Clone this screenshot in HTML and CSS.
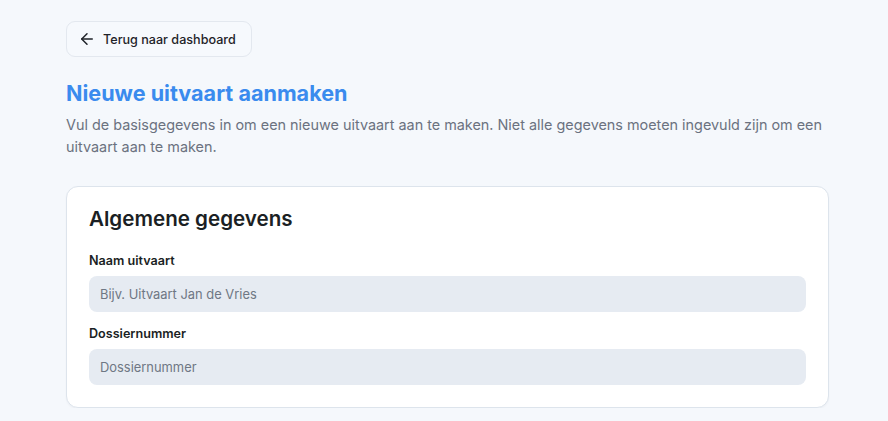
FILE: index.html
```html
<!DOCTYPE html>
<html lang="nl">
<head>
<meta charset="utf-8">
<title>Nieuwe uitvaart aanmaken</title>
<link rel="stylesheet" href="styles.css">
</head>
<body>
<main class="page">
  <a class="back-btn" href="#">
    <svg class="back-icon" viewBox="0 0 24 24" width="18" height="18" fill="none" stroke="currentColor" stroke-width="2" stroke-linecap="round" stroke-linejoin="round"><path d="M19 12H5"/><path d="M12 19l-7-7 7-7"/></svg>
    <span>Terug naar dashboard</span>
  </a>
  <h1 class="title">Nieuwe uitvaart aanmaken</h1>
  <p class="intro">Vul de basisgegevens in om een nieuwe uitvaart aan te maken. Niet alle gegevens moeten ingevuld zijn om een uitvaart aan te maken.</p>
  <section class="card">
    <h2 class="card-title">Algemene gegevens</h2>
    <div class="field">
      <label class="label" for="naam">Naam uitvaart</label>
      <input class="input" id="naam" type="text" placeholder="Bijv. Uitvaart Jan de Vries">
    </div>
    <div class="field">
      <label class="label" for="dossier">Dossiernummer</label>
      <input class="input" id="dossier" type="text" placeholder="Dossiernummer">
    </div>
  </section>
</main>
</body>
</html>
```
FILE: styles.css
```css
* { box-sizing: border-box; }
html, body { margin: 0; padding: 0; }
body {
  background: #f5f8fc;
  font-family: Inter, "Noto Sans", sans-serif;
  color: #1f2329;
}
.page {
  width: 763px;
  margin-left: 66px;
  padding-top: 21px;
}
.back-btn {
  display: inline-flex;
  align-items: center;
  gap: 7px;
  height: 36px;
  padding: 0 15px 0 11px;
  border: 1px solid #e3e8ef;
  border-radius: 9px;
  background: #f6f9fd;
  color: #1f2329;
  text-decoration: none;
  font-size: 12.6px;
  font-weight: 500;
}
.back-icon { display: block; flex: none; }
.title {
  margin: 23px 0 0;
  font-size: 21.6px;
  line-height: 27px;
  font-weight: 700;
  color: #3a8bee;
}
.intro {
  margin: 7px 0 0;
  font-size: 14.4px;
  line-height: 21.6px;
  color: #6b7280;
}
.card {
  margin-top: 29px;
  background: #fff;
  border: 1px solid #dde4ec;
  border-radius: 12px;
  padding: 18px 22px 22px;
  box-shadow: 0 1px 2px rgba(15, 23, 42, 0.04);
}
.card-title {
  margin: 0 0 19px;
  font-size: 20.6px;
  line-height: 28px;
  font-weight: 600;
  color: #1b1f24;
}
.field + .field { margin-top: 13px; }
.label {
  display: block;
  font-size: 12.6px;
  line-height: 18px;
  font-weight: 600;
  color: #1b1f24;
  margin-bottom: 6px;
}
.input {
  display: block;
  width: 100%;
  height: 36px;
  border: none;
  border-radius: 8px;
  background: #e6ebf2;
  padding: 0 11px;
  font-family: inherit;
  font-size: 12.9px;
  color: #1f2329;
  outline: none;
}
.input::placeholder { color: #6f7784; }
```
